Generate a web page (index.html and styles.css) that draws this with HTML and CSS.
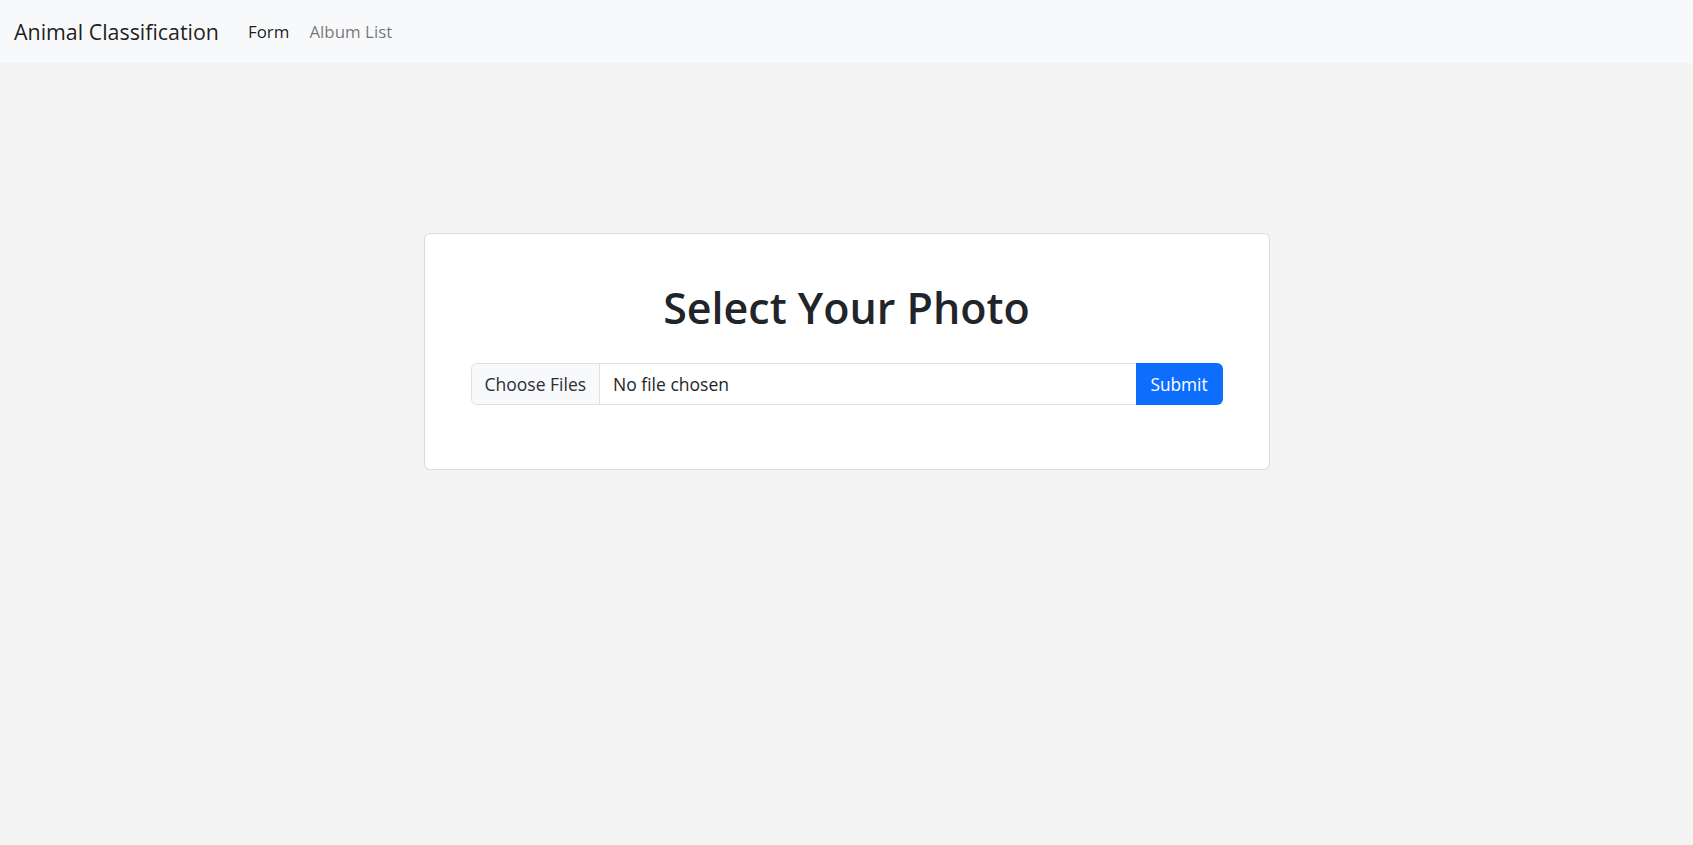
FILE: index.html
```html
<!DOCTYPE html>
<html lang="en">
<head>
<meta charset="utf-8">
<title>Animal Classification</title>
<link rel="stylesheet" href="styles.css">
</head>
<body>
<nav class="navbar">
  <a class="brand" href="#">Animal Classification</a>
  <ul class="nav">
    <li><a class="nav-link active" href="#">Form</a></li>
    <li><a class="nav-link" href="#">Album List</a></li>
  </ul>
</nav>
<main class="main">
  <div class="card">
    <h1 class="title">Select Your Photo</h1>
    <form class="input-group">
      <label class="file-control">
        <span class="file-btn">Choose Files</span>
        <span class="file-name">No file chosen</span>
      </label>
      <button type="button" class="btn-submit">Submit</button>
    </form>
  </div>
</main>
</body>
</html>
```
FILE: styles.css
```css
* { box-sizing: border-box; }
html, body { margin: 0; padding: 0; }
body {
  background: #f4f4f4;
  font-family: "Open Sans", "Noto Sans", sans-serif;
  color: #212529;
  min-height: 845px;
}
.navbar {
  height: 63px;
  background: #f8f9fa;
  display: flex;
  align-items: center;
  padding: 0 14px;
}
.brand {
  font-size: 21.4px;
  color: rgba(0,0,0,0.9);
  text-decoration: none;
  margin-right: 19px;
}
.nav {
  list-style: none;
  margin: 0;
  padding: 0;
  display: flex;
}
.nav-link {
  display: block;
  font-size: 16.9px;
  padding: 8px 10px;
  color: rgba(0,0,0,0.55);
  text-decoration: none;
}
.nav-link.active { color: rgba(0,0,0,0.9); }
.main {
  display: flex;
  justify-content: center;
  padding-top: 170px;
}
.card {
  width: 846px;
  height: 237px;
  background: #fff;
  border: 1px solid rgba(0,0,0,0.14);
  border-radius: 6px;
  padding: 45px 46px 0;
}
.title {
  margin: 0 0 26px;
  text-align: center;
  font-weight: 600;
  font-size: 43px;
  line-height: 58px;
  color: #212529;
}
.input-group {
  display: flex;
  height: 42px;
  margin: 0;
}
.file-control {
  flex: 1;
  display: flex;
  border: 1px solid #dee2e6;
  border-right: none;
  border-radius: 6px 0 0 6px;
  overflow: hidden;
  font-size: 17.5px;
  cursor: pointer;
}
.file-btn {
  display: flex;
  align-items: center;
  padding: 0 13px 0 13px;
  background: #f8f9fa;
  border-right: 1px solid #dee2e6;
  color: #2b2f33;
}
.file-name {
  display: flex;
  align-items: center;
  padding: 0 13px;
  color: #212529;
}
.btn-submit {
  width: 87px;
  background: #0d6efd;
  color: #fff;
  border: none;
  border-radius: 0 6px 6px 0;
  font-family: inherit;
  font-size: 17.3px;
  padding: 0;
}
```
